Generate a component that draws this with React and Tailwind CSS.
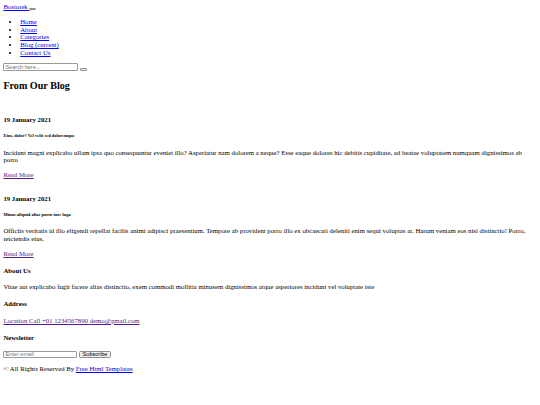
import React from "react";

const posts = [
  {
    date: "19 January 2021",
    title: "Eius, dolor? Vel velit sed doloremque",
    text: "Incidunt magni explicabo ullam ipsa quo consequuntur eveniet illo? Asperiatur nam dolorem a neque? Esse eaque dolores hic debitis cupiditate, ad beatae voluptatem numquam dignissimos ab porro",
  },
  {
    date: "19 January 2021",
    title: "Minus aliquid alias porro iure fuga",
    text: "Officiis veritatis id illo eligendi repellat facilis animi adipisci praesentium. Tempore ab provident porro illo ex obcaecati deleniti enim sequi voluptas at. Harum veniam eos nisi distinctio! Porro, reiciendis eius.",
  },
];

const navLinks = ["Home", "About", "Categories", "Blog (current)", "Contact Us"];

function App() {
  return (
    <div className="bg-white p-[3.375px] font-['Liberation_Serif',serif] text-[6.75px] leading-[7.76px] text-black">
      <header>
        <nav>
          <a href="#" className="text-[#0000ee] underline">
            {"Bostorek "}
          </a>
          <button className="inline-block h-[2.6px] w-[6.75px] rounded-[1px] border border-[#8f8f8f] bg-[#efefef] align-baseline"></button>
          <div>
            <ul className="my-[6.75px] list-disc pl-[16.875px]">
              {navLinks.map((link) => (
                <li key={link}>
                  <a href="#" className="text-[#0000ee] underline">
                    {link}
                  </a>
                </li>
              ))}
            </ul>
          </div>
          <form className="leading-[7.7px]">
            <input
              type="text"
              placeholder="Search here..."
              className="h-[7.7px] w-[75px] rounded-[1px] border border-[#9a9a9a] px-[1px] align-bottom font-['Liberation_Sans',sans-serif] text-[5.6px] placeholder:text-[#757575]"
            />{" "}
            <button className="inline-block h-[2.6px] w-[6.75px] rounded-[1px] border border-[#8f8f8f] bg-[#efefef] align-[-0.5px]"></button>
          </form>
        </nav>
      </header>

      <section>
        <h2 className="my-[8.4px] text-[10.125px] leading-[11.64px] font-bold">From Our Blog</h2>
        <div>
          {posts.map((post, i) => (
            <div key={i}>
              <div className="h-[7.76px]"></div>
              <div>
                <h4 className="my-[9px] font-bold">{post.date}</h4>
                <h6 className="mt-[8.6px] mb-[10.2px] text-[4.52px] leading-[5.2px] font-bold">{post.title}</h6>
                <p className="my-[6.75px]">{post.text}</p>
                <a href="#" className="text-[#551a8b] underline">
                  Read More
                </a>
              </div>
            </div>
          ))}
        </div>
      </section>

      <footer>
        <h4 className="my-[9px] font-bold">About Us</h4>
        <p className="my-[6.75px]">
          Vitae aut explicabo fugit facere alias distinctio, exem commodi mollitia minusem dignissimos atque asperiores incidunt vel voluptate iste
        </p>
        <h4 className="my-[9px] font-bold">Address</h4>
        <div>
          <a href="#" className="text-[#551a8b] underline">
            {"Location "}
          </a>
          <a href="#" className="text-[#551a8b] underline">
            {"Call +01 1234567890 "}
          </a>
          <a href="#" className="text-[#551a8b] underline">
            demo@gmail.com
          </a>
        </div>
        <h4 className="my-[9px] font-bold">Newsletter</h4>
        <form className="leading-[8px]">
          <input
            type="email"
            placeholder="Enter email"
            className="h-[7.7px] w-[74px] rounded-[1px] border border-[#9a9a9a] px-[1px] align-bottom font-['Liberation_Sans',sans-serif] text-[5.6px] placeholder:text-[#757575]"
          />{" "}
          <button className="inline-block h-[7.7px] rounded-[1.5px] border border-[#8f8f8f] bg-[#efefef] px-[2.5px] align-bottom font-['Liberation_Sans',sans-serif] text-[5.6px] leading-none">
            Subscribe
          </button>
        </form>
        <p className="my-[6.75px]">
          © All Rights Reserved By{" "}
          <a href="#" className="text-[#0000ee] underline">
            Free Html Templates
          </a>
        </p>
      </footer>
    </div>
  );
}

export default App;
